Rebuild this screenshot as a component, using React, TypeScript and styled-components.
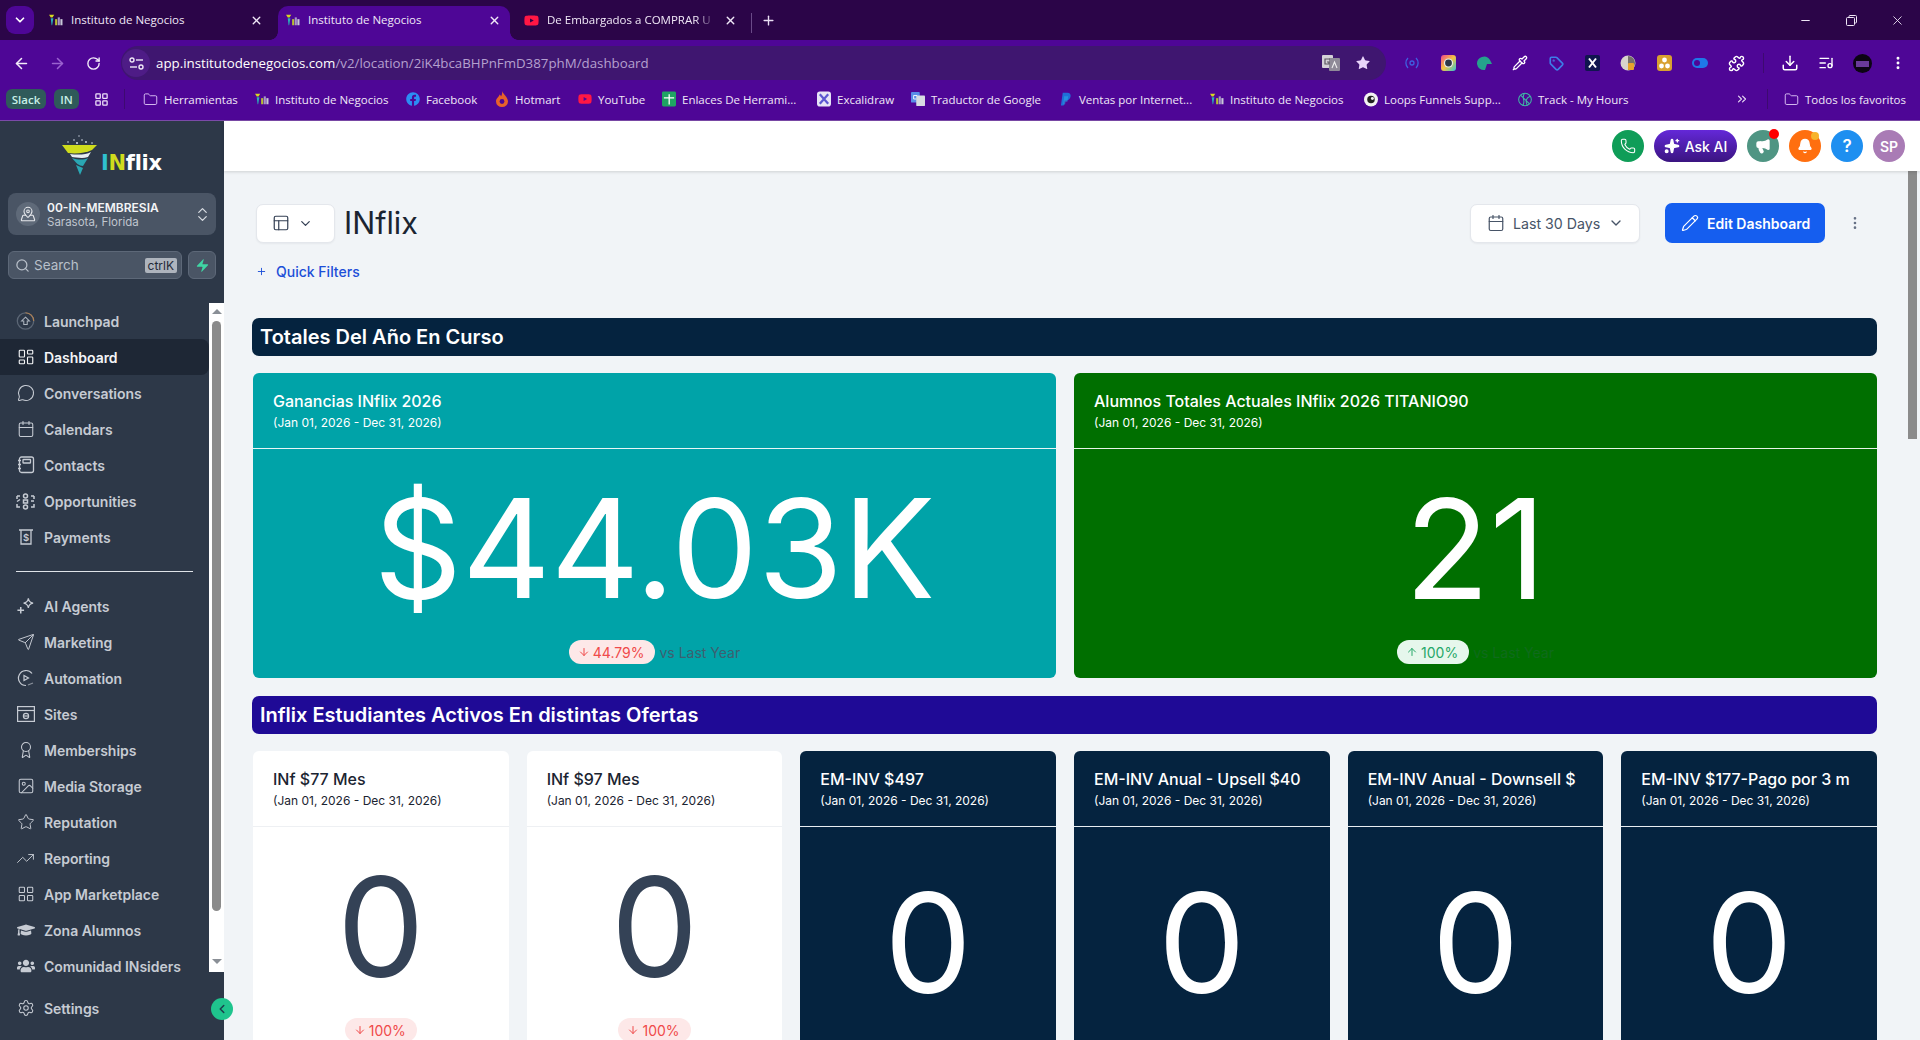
import React from "react";
import styled, { createGlobalStyle } from "styled-components";
import {
  ArrowLeft, ArrowRight, RotateCw, X, Plus, Minus, ChevronDown, ChevronUp, ChevronLeft, ChevronsRight,
  Star, Download, ListMusic, MoreVertical, Folder, LayoutGrid, MapPinned, Search, Zap, MessageCircle, Calendar,
  Send, Award, Image as ImageIcon, TrendingUp, Settings, Phone, Bell, Pencil, ArrowDown, ArrowUp, Megaphone,
  Puzzle, Sparkles, LayoutDashboard, PanelsTopLeft, Pipette, Tag,
} from "lucide-react";
import { FaGraduationCap, FaUsers, FaFacebook, FaYoutube } from "react-icons/fa";

const Global = createGlobalStyle`
  html, body { margin: 0; padding: 0; height: 100%; overflow: hidden; background: #f1f4f7; }
  #root { height: 100%; }
  * { box-sizing: border-box; }
`;

const Page = styled.div`
  width: 1920px; height: 1040px; display: flex; flex-direction: column; overflow: hidden;
  font-family: Inter, "Liberation Sans", sans-serif;
`;

/* ---------- browser chrome ---------- */
const TabStrip = styled.div`
  height: 40px; background: #2b0548; display: flex; align-items: flex-end; padding-left: 6px;
  font-family: "Open Sans", "Liberation Sans", sans-serif; color: #f0e8f7; position: relative;
`;
const TabMenu = styled.div`
  width: 28px; height: 28px; margin-bottom: 6px; border-radius: 9px; background: #4e0696;
  display: flex; align-items: center; justify-content: center; color: #fff; margin-right: 15px;
`;
const Tab = styled.div<{ $active?: boolean; $w: number; $pl: number; $pr: number }>`
  width: ${p => p.$w}px; height: 34px; display: flex; align-items: center; gap: 8px; position: relative;
  padding: 0 ${p => p.$pr}px ${p => (p.$active ? 0 : 6)}px ${p => p.$pl}px; border-radius: 10px 10px 0 0;
  background: ${p => (p.$active ? "#4e0696" : "transparent")};
  font-size: 11.5px; white-space: nowrap;
  ${p => p.$active && `
    padding-bottom: 6px;
    &::before, &::after { content: ""; position: absolute; bottom: 0; width: 8px; height: 8px; }
    &::before { left: -8px; background: radial-gradient(circle at 0 0, transparent 7.5px, #4e0696 8px); }
    &::after { right: -8px; background: radial-gradient(circle at 100% 0, transparent 7.5px, #4e0696 8px); }
  `}
`;
const TabTitle = styled.span<{ $fade?: boolean }>`
  flex: 1; overflow: hidden; margin-top: -1px;
  ${p => p.$fade && `mask-image: linear-gradient(90deg, #000 88%, transparent);`}
`;
const TabSep = styled.div`
  width: 1px; height: 20px; background: #6a4a88; margin: 0 9px 7px 10px;
`;
const PlusWrap = styled.div`
  height: 34px; padding-bottom: 6px; display: flex; align-items: center; color: #eadff3;
`;
const WindowBtns = styled.div`
  margin-left: auto; height: 40px; display: flex; align-items: center; color: #efe6f6;
`;
const WindowBtn = styled.div`
  width: 46px; display: flex; justify-content: center;
`;
const Toolbar = styled.div`
  height: 40px; background: #4e0696; display: flex; align-items: center; padding: 6px 0 0 3px; color: #f1e9f8;
`;
const NavBtn = styled.div<{ $dim?: boolean }>`
  width: 36px; display: flex; justify-content: center; color: ${p => (p.$dim ? "#9a62cf" : "#f3ecf9")};
`;
const Omni = styled.div`
  width: 1265px; height: 34px; margin-left: 10px; border-radius: 17px; background: #3f1670;
  display: flex; align-items: center; font-family: "Open Sans", "Liberation Sans", sans-serif; font-size: 13.3px; color: #b5a0cf;
  padding-right: 15px; flex: none;
`;
const SiteInfo = styled.div`
  width: 28px; height: 28px; margin-left: 1px; margin-right: 6px; border-radius: 50%; background: #4e1c86;
  display: flex; align-items: center; justify-content: center; color: #f0e8f7;
`;
const Host = styled.span`
  color: #fff;
`;
const OmniRight = styled.div`
  margin-left: auto; display: flex; align-items: center; gap: 15px; color: #e0c9f8;
`;
const ExtRow = styled.div`
  display: flex; align-items: center; margin-left: 8px;
`;
const Ext = styled.div`
  width: 36px; display: flex; justify-content: center; align-items: center; color: #fff;
`;
const ToolDivider = styled.div`
  width: 1px; height: 20px; background: #3d0a70; margin: 0 8px 0 9px;
`;
const Bookmarks = styled.div`
  height: 41px; background: #4e0696; display: flex; align-items: center; padding: 0 14px 2px 6px;
  font-family: "Open Sans", "Liberation Sans", sans-serif; font-size: 11.5px; color: #f0e8f7; border-bottom: 1px solid #7b4aa8; white-space: nowrap;
`;
const Chip = styled.div<{ $w: number }>`
  width: ${p => p.$w}px; height: 20px; border-radius: 6px; background: #2f5a5a; color: #c9f0e8; font-weight: 600;
  display: flex; align-items: center; justify-content: center; margin-right: 8px;
`;
const BmGridBtn = styled.div`
  width: 22px; margin: 0 0 0 3px; display: flex; justify-content: center; color: #efe3fa;
`;
const BmDivider = styled.div<{ $l: number; $r: number }>`
  width: 1px; height: 20px; background: #3d0a70; margin: 0 ${p => p.$r}px 0 ${p => p.$l}px;
`;
const Bm = styled.div<{ $w?: number }>`
  display: flex; align-items: center; flex: none; ${p => (p.$w ? `width: ${p.$w}px;` : "")}
`;
const BmIcon = styled.span`
  width: 15px; flex: none; display: flex; justify-content: center; align-items: center; margin: 0 6px 0 -6px;
`;
const BmRight = styled.div`
  margin-left: auto; display: flex; align-items: center;
`;

/* ---------- app ---------- */
const App_ = styled.div`
  flex: 1; display: flex; min-height: 0;
`;
const Side = styled.aside`
  width: 224px; flex: none; background: #2d3848; display: flex; flex-direction: column; position: relative;
`;
const LogoWrap = styled.div`
  height: 72px; padding: 14px 0 0 62px; display: flex; align-items: flex-start; gap: 3px;
`;
const LogoText = styled.div`
  font-family: "DejaVu Sans", sans-serif; font-weight: 700; font-size: 21px; line-height: 24px; margin-top: 16px; color: #fff; letter-spacing: -0.3px;
`;
const LogoI = styled.span<{ $c: string }>`
  color: ${p => p.$c};
`;
const Location = styled.div`
  margin: 0 8px; height: 42px; border-radius: 8px; background: #4a5565; display: flex; align-items: center; padding: 0 8px; color: #fff;
`;
const LocIcon = styled.div`
  width: 24px; height: 24px; border-radius: 50%; background: #5f6a79; display: flex; align-items: center; justify-content: center; color: #e6e8ec; flex: none; margin-right: 7px;
`;
const LocText = styled.div`
  flex: 1; display: flex; flex-direction: column; font-size: 12px; line-height: 15px; padding-top: 1px;
`;
const LocName = styled.span`
  font-weight: 600; color: #f3f4f6;
`;
const LocSub = styled.span`
  color: #c0c6cf; font-size: 11.5px;
`;
const UpDown = styled.div`
  display: flex; flex-direction: column; color: #d8dce2; margin-right: -2px; gap: 0;
  & > svg:first-child { margin-bottom: -7px; }
`;
const SearchRow = styled.div`
  margin: 16px 8px 24px; display: flex; gap: 6px; height: 28px;
`;
const SearchBox = styled.div`
  flex: 1; border-radius: 6px; background: #4a5565; border: 1px solid #5d6878; display: flex; align-items: center; padding: 0 4px 0 6px; gap: 4px; color: #b9c0ca; font-size: 13.5px;
`;
const Kbd = styled.span`
  margin-left: auto; background: #aeb4bd; color: #1f2937; font-size: 12px; line-height: 15px; padding: 0 3px; border-radius: 2px;
`;
const Bolt = styled.div`
  width: 28px; border-radius: 6px; background: #4a5565; border: 1px solid #5d6878; display: flex; align-items: center; justify-content: center; color: #3fd6a4;
`;
const NavScroll = styled.div`
  height: 669px; display: flex;
`;
const NavList = styled.div`
  flex: 1; min-width: 0;
`;
const NavItem = styled.div<{ $active?: boolean }>`
  height: 36px; display: flex; align-items: center; padding-left: 16px; gap: 9px; font-size: 14px; font-weight: 600; letter-spacing: -0.03px;
  color: ${p => (p.$active ? "#f4f5f7" : "#c6cbd3")};
  background: ${p => (p.$active ? "#1e2735" : "transparent")};
  border-radius: ${p => (p.$active ? "0 8px 8px 0" : "0")};
`;
const NavIcon = styled.span`
  width: 19px; display: flex; justify-content: center; flex: none;
`;
const NavDivider = styled.div`
  height: 1px; background: #dfe3e8; margin: 16px 16px 16px 16px;
`;
const Track = styled.div`
  width: 15px; flex: none; background: #fff; display: flex; flex-direction: column; align-items: center; padding-top: 6px;
`;
const ArrowUpTri = styled.div`
  border-left: 5px solid transparent; border-right: 5px solid transparent; border-bottom: 5px solid #8a8f96;
`;
const Thumb = styled.div`
  width: 9px; height: 590px; margin-top: 7px; border-radius: 5px; background: #8b8b8b;
`;
const ArrowDownTri = styled.div`
  border-left: 5px solid transparent; border-right: 5px solid transparent; border-top: 5px solid #8a8f96; margin-top: 48px;
`;
const SettingsRow = styled.div`
  margin-top: 18px;
`;
const Collapse = styled.div`
  position: absolute; right: -9px; top: 877px; width: 22px; height: 22px; border-radius: 50%; background: #1fc48d; color: #1c3d4c;
  display: flex; align-items: center; justify-content: center;
`;
const Main = styled.main`
  flex: 1; min-width: 0; display: flex; flex-direction: column;
`;
const TopBar = styled.header`
  height: 50px; flex: none; background: #fff; box-shadow: 0 1px 3px rgba(0,0,0,.15); display: flex; align-items: center; justify-content: flex-end; padding-right: 15px; gap: 10px; position: relative;
`;
const Round = styled.div<{ $bg: string; $fs?: number }>`
  width: 32px; height: 32px; border-radius: 50%; background: ${p => p.$bg}; color: #fff; display: flex; align-items: center; justify-content: center; position: relative; font-size: ${p => p.$fs ?? 14}px; font-weight: 600; flex: none;
`;
const Dot = styled.span<{ $c: string; $s: number }>`
  position: absolute; top: ${p => (p.$s > 8 ? -1 : 2)}px; right: ${p => (p.$s > 8 ? 0 : 2)}px; width: ${p => p.$s}px; height: ${p => p.$s}px; border-radius: 50%; background: ${p => p.$c};
`;
const AskAI = styled.div`
  width: 83px; height: 32px; border-radius: 16px; background: linear-gradient(180deg, #6428d8, #3a1480); color: #fff; font-size: 14px; font-weight: 500; display: flex; align-items: center; justify-content: center; gap: 5px;
`;
const Body = styled.div`
  flex: 1; display: flex; min-height: 0; background: #f1f4f7;
`;
const Content = styled.div`
  flex: 1; min-width: 0; padding: 32px 31px 0 28px; overflow: hidden;
`;
const PageScroll = styled.div`
  width: 12px; flex: none;
`;
const PageThumb = styled.div`
  width: 9px; height: 268px; background: #8b8b8b;
`;
const TitleRow = styled.div`
  display: flex; align-items: center; height: 40px; padding-left: 4px;
`;
const WhiteBtn = styled.div`
  height: 39px; border-radius: 7px; background: #fff; border: 1px solid #e4e7ec; box-shadow: 0 1px 2px rgba(16,24,40,.05); display: flex; align-items: center; color: #344054;
`;
const LayoutBtn = styled(WhiteBtn)`
  width: 79px; padding-left: 15px; gap: 8px;
`;
const Title = styled.h1`
  font-size: 30.5px; font-weight: 400; color: #1b2431; margin: 0 0 0 9px; line-height: 40px;
`;
const RightBtns = styled.div`
  margin-left: auto; display: flex; align-items: center;
`;
const DateBtn = styled(WhiteBtn)`
  width: 170px; padding-left: 16px; gap: 8px; font-size: 14.2px; color: #475467;
`;
const EditBtn = styled.div`
  width: 160px; height: 40px; margin-left: 25px; border-radius: 7px; background: #155eef; color: #fff; font-size: 14px; font-weight: 600; display: flex; align-items: center; padding-left: 16px; gap: 8px;
`;
const Kebab = styled.div`
  width: 60px; display: flex; justify-content: center; color: #667085; margin-right: -8px;
`;
const Quick = styled.div`
  margin: 18px 0 37px 4px; height: 20px; display: flex; align-items: center; gap: 9px; color: #1d4fd8; font-size: 14px; font-weight: 500;
`;
const SectionBar = styled.div<{ $bg: string }>`
  height: 38px; border-radius: 7px; background: ${p => p.$bg}; color: #fff; font-size: 20px; font-weight: 600; display: flex; align-items: center; padding-left: 8px;
`;
const Row = styled.div<{ $cols: number }>`
  display: grid; grid-template-columns: repeat(${p => p.$cols}, 1fr); gap: 18px; margin: 17px 0 18px 1px;
`;
const Card = styled.div<{ $bg: string; $fg: string; $line: string }>`
  height: 305px; border-radius: 6px; background: ${p => p.$bg}; color: ${p => p.$fg}; overflow: hidden; --line: ${p => p.$line};
`;
const CardHead = styled.div`
  height: 76px; padding: 16px 20px 0; border-bottom: 1px solid var(--line);
`;
const CardTitle = styled.div`
  font-size: 16px; font-weight: 500; line-height: 24px; white-space: nowrap;
`;
const CardDate = styled.div`
  font-size: 12px; line-height: 18px; margin-top: 1px; white-space: nowrap;
`;
const CardBody = styled.div<{ $top: number }>`
  padding-top: ${p => p.$top}px; display: flex; flex-direction: column; align-items: center;
`;
const BigValue = styled.div<{ $c: string; $size?: number }>`
  height: 183px; line-height: 183px; font-size: ${p => p.$size ?? 139}px; font-weight: 400; color: ${p => p.$c}; white-space: nowrap;
`;
const PillRow = styled.div`
  display: flex; align-items: center; gap: 4px; font-size: 14px;
`;
const Pill = styled.div<{ $bg: string; $c: string }>`
  height: 24px; padding: 0 11px 0 9px; border-radius: 12px; background: ${p => p.$bg}; color: ${p => p.$c}; display: flex; align-items: center; gap: 3px; font-size: 14px;
`;
const VsText = styled.span<{ $c: string }>`
  color: ${p => p.$c};
`;

/* ---------- drawings ---------- */
const FunnelLogo = () => (
  <svg width="36" height="40" viewBox="0 0 36 40">
    <g fill="#d7e0ea"><circle cx="6" cy="7" r=".8" /><circle cx="12" cy="5" r=".8" /><circle cx="15" cy="8" r="1" /><circle cx="20" cy="5" r=".8" /><circle cx="24" cy="7" r=".9" /><circle cx="30" cy="8" r=".8" /><circle cx="17" cy="1" r=".7" /></g>
    <path d="M0 10 H35 L30 15 C24 18 14 19 6 18 Z" fill="#cfdc1d" />
    <path d="M8 19 C15 20 24 20 29 17 L26 22 C20 24 13 22 10 22 Z" fill="#e8edf2" />
    <path d="M10 23 C16 25 22 25 26 23 L21 31 C17 31 14 28 10 23 Z" fill="#2aa7b4" />
    <path d="M14 30 L21 33 L18 40 Z" fill="#2aa7b4" />
  </svg>
);
const Favicon = () => (
  <svg width="14" height="14" viewBox="0 0 16 14">
    <path d="M0 1 H6 L4 4 L2 4 Z" fill="#d6d820" />
    <path d="M2 5 H5 L3.6 13 H3 Z" fill="#29b0b8" />
    <rect x="7" y="6" width="2.4" height="7" fill="#b8c030" />
    <rect x="10" y="4" width="2.4" height="9" fill="#a896c8" />
    <rect x="13" y="6" width="2.4" height="7" fill="#c8c8d8" />
  </svg>
);
const Restore = () => (
  <svg width="11" height="11" viewBox="0 0 11 11" fill="none" stroke="currentColor"><rect x=".5" y="2.5" width="8" height="8" rx="1" /><path d="M3 2.5 V1.5 a1 1 0 0 1 1-1 h5.5 a1 1 0 0 1 1 1 V7 a1 1 0 0 1-1 1 h-1" /></svg>
);
const TuneIcon = () => (
  <svg width="15" height="13" viewBox="0 0 15 13" fill="none" stroke="currentColor" strokeWidth="1.4">
    <circle cx="3" cy="3" r="2" /><path d="M7 3 H14" /><path d="M1 10 H8" /><circle cx="12" cy="10" r="2" />
  </svg>
);
const TabYt = () => <FaYoutube size={15} color="#ff1744" />;
const YtIcon = () => <FaYoutube size={14} color="#ff1744" />;
const HotmartIcon = () => (
  <svg width="12" height="16" viewBox="0 0 12 16"><path d="M6 0 C7 3 12 6 12 10.5 A6 5.5 0 0 1 0 10.5 C0 7 3 6 3.5 3.5 C4.5 4 5 5 5 5.5 C6 4 6.3 2 6 0 Z" fill="#e8622a" /><circle cx="6" cy="10.5" r="2.4" fill="#4e0696" /></svg>
);
const GreenDoc = () => (
  <svg width="14" height="16" viewBox="0 0 15 16"><rect width="15" height="16" rx="1.5" fill="#1fa463" /><path d="M7 3 H8.4 V6 H13 V7.4 H8.4 V14 H7 V7.4 H2 V6 H7 Z" fill="#fff" /></svg>
);
const ExcalIcon = () => (
  <svg width="14" height="16" viewBox="0 0 15 16"><rect width="15" height="16" rx="3" fill="#e6e4f7" /><path d="M3 3 L12 13 M12 3 L3 13" stroke="#5b57d1" strokeWidth="2.4" /></svg>
);
const TranslateIcon = () => (
  <svg width="14" height="16" viewBox="0 0 16 16"><rect width="10" height="12" rx="1" fill="#5a8de8" /><rect x="6" y="4" width="10" height="12" rx="1" fill="#d8dce2" /><path d="M3 4 H7 M3 4 V8 H6" stroke="#fff" fill="none" /></svg>
);
const OmniTranslate = () => (
  <svg width="18" height="18" viewBox="0 0 18 18"><rect x="0" y="1" width="11" height="13" rx="1" fill="#d4d0d8" /><rect x="7" y="4" width="11" height="13" rx="1" fill="#8f8a98" /><path d="M8 5 H3 V10 H7 V8 H5" stroke="#5a5560" fill="none" strokeWidth="1.2" /><path d="M10 14 L12.5 8 L15 14" stroke="#eee" fill="none" strokeWidth="1.1" /></svg>
);
const PayIcon = () => (
  <svg width="11" height="15" viewBox="0 0 12 15"><path d="M3 0 H8 C11 0 12 2 11.5 4.5 C11 7 9 8.5 6.5 8.5 H5 L4 14 H1 Z" fill="#1f6fd8" /><path d="M4.5 4 H9 L8 10 H6 L5.5 13 L3.5 13 Z" fill="#2aa5e8" opacity=".6" /></svg>
);
const LoopIcon = () => (
  <svg width="14" height="15" viewBox="0 0 15 16"><circle cx="7.5" cy="8" r="7.5" fill="#f3f3f3" /><circle cx="7.5" cy="8" r="4" fill="#222" /><circle cx="9" cy="7" r="1.6" fill="#f3f3f3" /></svg>
);
const TrackIcon = () => (
  <svg width="14" height="15" viewBox="0 0 15 15" fill="none" stroke="#3fb8a5" strokeWidth="1.1"><circle cx="7.5" cy="7.5" r="6.8" /><path d="M3 3 L12 12 M7 1 C3 6 9 9 5 14 M13 4 C8 6 8 10 10 14" /></svg>
);
const MiniTile = ({ bg, children }: { bg: string; children?: React.ReactNode }) => (
  <svg width="15" height="16" viewBox="0 0 15 16"><rect width="15" height="16" rx="3" fill={bg} />{children}</svg>
);
const OppIcon = () => (
  <svg width="19" height="17" viewBox="0 0 19 17" fill="none" stroke="currentColor" strokeWidth="1.5">
    <circle cx="9.5" cy="3" r="2" /><rect x="7.5" y="7" width="4" height="3" /><circle cx="9.5" cy="14" r="2" />
    <path d="M1 3 H4 M1 3 V6 M15 3 H18 M18 3 V6 M1 11 V14 H4 M18 11 V14 H15 M1 8.5 L4 6.5 M15 8 L18 8" />
  </svg>
);
const ContactsIcon = () => (
  <svg width="18" height="18" viewBox="0 0 18 18" fill="none" stroke="currentColor" strokeWidth="1.3">
    <rect x="2.5" y="1" width="14" height="15.5" rx="2" /><rect x="6" y="3.5" width="7.5" height="3.5" rx=".6" />
    <path d="M1 4.5 H4 M1 8.5 H4 M1 12.5 H4" />
  </svg>
);
const PaymentIcon = () => (
  <svg width="18" height="18" viewBox="0 0 18 18" fill="none" stroke="currentColor" strokeWidth="1.3">
    <path d="M2 2 H16 M4 2 V16 H14 V2" /><text x="9" y="13" fontSize="9.5" textAnchor="middle" fill="currentColor" stroke="none" fontFamily="Inter" fontWeight="600">$</text>
  </svg>
);
const AgentsIcon = () => (
  <svg width="20" height="18" viewBox="0 0 20 18" fill="none" stroke="currentColor" strokeWidth="1.3">
    <path d="M13 1 C13.5 4 15 5.5 18 6 C15 6.5 13.5 8 13 11 C12.5 8 11 6.5 8 6 C11 5.5 12.5 4 13 1 Z" />
    <path d="M5 10 V17 M1.5 13.5 H8.5" strokeWidth="1.6" />
  </svg>
);
const AutomationIcon = () => (
  <svg width="19" height="18" viewBox="0 0 19 18" fill="none" stroke="currentColor" strokeWidth="1.2">
    <path d="M16 4.5 A7.5 7.5 0 1 0 10 16.5" />
    <path d="M8 6.5 L12.5 9 L8 11.5 Z" />
    <path d="M12 16 L17 14" opacity=".6" />
  </svg>
);
const SitesIcon = () => (
  <svg width="18" height="16" viewBox="0 0 18 16" fill="none" stroke="currentColor" strokeWidth="1.2">
    <rect x=".6" y=".6" width="16.8" height="14.8" /><path d="M.6 4.5 H17.4" /><circle cx="9" cy="10" r="2.6" /><path d="M6.4 10 H11.6" />
  </svg>
);
const LaunchIcon = () => (
  <svg width="22" height="22" viewBox="0 0 22 22" fill="none">
    <circle cx="11" cy="11" r="9.5" stroke="#5b6675" strokeWidth="1.5" />
    <path d="M11 1.5 A9.5 9.5 0 0 1 20.5 11" stroke="#c98a4a" strokeWidth="1.2" opacity=".8" />
    <path d="M11 6.5 L15.5 11 H13 V15 H9 V11 H6.5 Z" stroke="#aeb5bf" strokeWidth="1.2" />
  </svg>
);

const navTop = [
  { label: "Launchpad", icon: <LaunchIcon /> },
  { label: "Dashboard", icon: <LayoutDashboard size={18} strokeWidth={1.5} />, active: true },
  { label: "Conversations", icon: <MessageCircle size={18} strokeWidth={1.4} /> },
  { label: "Calendars", icon: <Calendar size={18} strokeWidth={1.4} /> },
  { label: "Contacts", icon: <ContactsIcon /> },
  { label: "Opportunities", icon: <OppIcon /> },
  { label: "Payments", icon: <PaymentIcon /> },
];
const navBottom = [
  { label: "AI Agents", icon: <AgentsIcon /> },
  { label: "Marketing", icon: <Send size={18} strokeWidth={1.3} /> },
  { label: "Automation", icon: <AutomationIcon /> },
  { label: "Sites", icon: <SitesIcon /> },
  { label: "Memberships", icon: <Award size={18} strokeWidth={1.4} /> },
  { label: "Media Storage", icon: <ImageIcon size={18} strokeWidth={1.4} /> },
  { label: "Reputation", icon: <Star size={18} strokeWidth={1.3} /> },
  { label: "Reporting", icon: <TrendingUp size={19} strokeWidth={1.2} /> },
  { label: "App Marketplace", icon: <LayoutGrid size={18} strokeWidth={1.4} /> },
  { label: "Zona Alumnos", icon: <FaGraduationCap size={18} /> },
  { label: "Comunidad INsiders", icon: <FaUsers size={18} /> },
];

const bookmarks = [
  { label: "Herramientas", icon: <Folder size={15} strokeWidth={1.5} color="#dcc3f5" />, w: 111 },
  { label: "Instituto de Negocios", icon: <Favicon />, w: 151 },
  { label: "Facebook", icon: <FaFacebook size={14} color="#2c8cf4" />, w: 89 },
  { label: "Hotmart", icon: <HotmartIcon />, w: 83 },
  { label: "YouTube", icon: <YtIcon />, w: 84 },
  { label: "Enlaces De Herrami...", icon: <GreenDoc />, w: 155 },
  { label: "Excalidraw", icon: <ExcalIcon />, w: 94 },
  { label: "Traductor de Google", icon: <TranslateIcon />, w: 148 },
  { label: "Ventas por Internet...", icon: <PayIcon />, w: 151 },
  { label: "Instituto de Negocios", icon: <Favicon />, w: 154 },
  { label: "Loops Funnels Supp...", icon: <LoopIcon />, w: 154 },
  { label: "Track - My Hours", icon: <TrackIcon />, w: 0 },
];

const DATE = "(Jan 01, 2026 - Dec 31, 2026)";
const offers = [
  { t: "INf $77 Mes", dark: false },
  { t: "INf $97 Mes", dark: false },
  { t: "EM-INV $497", dark: true },
  { t: "EM-INV Anual - Upsell $40", dark: true },
  { t: "EM-INV Anual - Downsell $", dark: true },
  { t: "EM-INV $177-Pago por 3 m", dark: true },
];

export default function App() {
  return (
    <Page>
      <Global />
      <TabStrip>
        <TabMenu><ChevronDown size={14} strokeWidth={3} /></TabMenu>
        <Tab $w={229} $pl={0} $pr={15}><Favicon /><TabTitle>Instituto de Negocios</TabTitle><X size={13} strokeWidth={2.5} /></Tab>
        <Tab $active $w={232} $pl={8} $pr={9}><Favicon /><TabTitle>Instituto de Negocios</TabTitle><X size={13} strokeWidth={2.5} /></Tab>
        <Tab $w={231} $pl={14} $pr={4}><TabYt /><TabTitle $fade>De Embargados a COMPRAR U</TabTitle><X size={13} strokeWidth={2.5} /></Tab>
        <TabSep />
        <PlusWrap><Plus size={15} strokeWidth={2.2} /></PlusWrap>
        <WindowBtns>
          <WindowBtn><Minus size={13} /></WindowBtn>
          <WindowBtn><Restore /></WindowBtn>
          <WindowBtn><X size={15} strokeWidth={1.4} /></WindowBtn>
        </WindowBtns>
      </TabStrip>
      <Toolbar>
        <NavBtn><ArrowLeft size={17} strokeWidth={2.2} /></NavBtn>
        <NavBtn $dim><ArrowRight size={17} strokeWidth={2.2} /></NavBtn>
        <NavBtn><RotateCw size={15} strokeWidth={2.2} /></NavBtn>
        <Omni>
          <SiteInfo><TuneIcon /></SiteInfo>
          <span><Host>app.institutodenegocios.com</Host>/v2/location/2iK4bcaBHPnFmD387phM/dashboard</span>
          <OmniRight>
            <OmniTranslate />
            <Star size={16} fill="#e8d4fa" strokeWidth={0} />
          </OmniRight>
        </Omni>
        <ExtRow>
          <Ext><svg width="16" height="16" viewBox="0 0 16 16" fill="none" stroke="#3f5fe0" strokeWidth="1.3"><circle cx="8" cy="8" r="2" /><path d="M4 3 a7 7 0 0 0 0 10 M12 3 a7 7 0 0 1 0 10" /></svg></Ext>
          <Ext><svg width="15" height="16" viewBox="0 0 15 16"><defs><linearGradient id="rb" x1="0" y1="0" x2="1" y2="1"><stop offset="0" stopColor="#f0468c" /><stop offset=".5" stopColor="#f5c542" /><stop offset="1" stopColor="#2cc4d8" /></linearGradient></defs><rect width="15" height="16" rx="3" fill="url(#rb)" /><circle cx="7.5" cy="8" r="4.6" fill="#e8eef0" /><circle cx="7.5" cy="8" r="3.4" fill="#2d3848" /></svg></Ext>
          <Ext><svg width="16" height="16" viewBox="0 0 16 16"><path d="M1 9 A7 7 0 0 1 14 5 L16 9 L11 9 L9 15 A7 7 0 0 1 1 9 Z" fill="#25a28c" /></svg></Ext>
          <Ext><Pipette size={16} strokeWidth={2} /></Ext>
          <Ext><Tag size={15} color="#3d7de8" strokeWidth={2.6} /></Ext>
          <Ext><svg width="15" height="16" viewBox="0 0 15 16"><rect width="15" height="16" rx="2" fill="#10154f" /><path d="M4 3.5 L11 12.5 M11 3.5 L4 12.5" stroke="#fff" strokeWidth="2" /></svg></Ext>
          <Ext><svg width="16" height="16" viewBox="0 0 16 16"><circle cx="8" cy="8" r="7.5" fill="#d8d4cc" /><path d="M8 1 V15 A7 7 0 0 0 8 1Z" fill="#74706a" /><rect x="8" y="8" width="6" height="7" rx="1" fill="#e8a32c" /></svg></Ext>
          <Ext><MiniTile bg="#d8a030"><circle cx="7.5" cy="5" r="2.4" fill="#fff" /><circle cx="4.5" cy="11" r="2.4" fill="#fff" /><circle cx="10.5" cy="11" r="2.4" fill="#fff" /></MiniTile></Ext>
          <Ext><svg width="16" height="12" viewBox="0 0 16 12"><rect y="1" width="16" height="10" rx="5" fill="#1e78e8" /><circle cx="5" cy="6" r="3" fill="#4e0696" /></svg></Ext>
          <Ext><Puzzle size={17} strokeWidth={2} /></Ext>
          <ToolDivider />
          <Ext><Download size={18} strokeWidth={2} /></Ext>
          <Ext><ListMusic size={16} strokeWidth={2} /></Ext>
          <Ext><svg width="19" height="19" viewBox="0 0 19 19"><circle cx="9.5" cy="9.5" r="9.5" fill="#0c0414" /><rect x="3" y="7" width="13" height="6" fill="#6a3a9a" /></svg></Ext>
          <Ext><MoreVertical size={16} strokeWidth={2.4} /></Ext>
        </ExtRow>
      </Toolbar>
      <Bookmarks>
        <Chip $w={40}>Slack</Chip>
        <Chip $w={25}>IN</Chip>
        <BmGridBtn><LayoutGrid size={15} strokeWidth={2} /></BmGridBtn>
        <BmDivider $l={12} $r={24} />
        {bookmarks.map((b, i) => (
          <Bm key={i} $w={b.w}><BmIcon>{b.icon}</BmIcon><span>{b.label}</span></Bm>
        ))}
        <BmRight>
          <ChevronsRight size={14} color="#e5d8f2" />
          <BmDivider $l={18} $r={22} />
          <Bm><BmIcon><Folder size={15} strokeWidth={1.5} color="#dcc3f5" /></BmIcon><span>Todos los favoritos</span></Bm>
        </BmRight>
      </Bookmarks>
      <App_>
        <Side>
          <LogoWrap>
            <FunnelLogo />
            <LogoText><LogoI $c="#2fc1cf">I</LogoI><LogoI $c="#cfdc1d">N</LogoI>flix</LogoText>
          </LogoWrap>
          <Location>
            <LocIcon><MapPinned size={16} strokeWidth={1.6} /></LocIcon>
            <LocText><LocName>00-IN-MEMBRESIA</LocName><LocSub>Sarasota, Florida</LocSub></LocText>
            <UpDown><ChevronUp size={15} strokeWidth={2} /><ChevronDown size={15} strokeWidth={2} /></UpDown>
          </Location>
          <SearchRow>
            <SearchBox><Search size={15} />Search<Kbd>ctrlK</Kbd></SearchBox>
            <Bolt><Zap size={15} fill="#3fd6a4" strokeWidth={0} /></Bolt>
          </SearchRow>
          <NavScroll>
            <NavList>
              {navTop.map(n => (
                <NavItem key={n.label} $active={n.active}><NavIcon>{n.icon}</NavIcon>{n.label}</NavItem>
              ))}
              <NavDivider />
              {navBottom.map(n => (
                <NavItem key={n.label}><NavIcon>{n.icon}</NavIcon>{n.label}</NavItem>
              ))}
            </NavList>
            <Track>
              <ArrowUpTri />
              <Thumb />
              <ArrowDownTri />
            </Track>
          </NavScroll>
          <SettingsRow>
            <NavItem><NavIcon><Settings size={18} strokeWidth={1.4} /></NavIcon>Settings</NavItem>
          </SettingsRow>
          <Collapse><ChevronLeft size={14} strokeWidth={2.6} /></Collapse>
        </Side>
        <Main>
          <TopBar>
            <Round $bg="#0f9d58"><Phone size={16} strokeWidth={1.6} /></Round>
            <AskAI><Sparkles size={16} fill="#fff" />Ask AI</AskAI>
            <Round $bg="#4f9583"><Megaphone size={16} fill="#fff" /><Dot $c="#f00" $s={10} /></Round>
            <Round $bg="#ff6f0f"><Bell size={16} fill="#fff" /><Dot $c="#f7b32b" $s={8} /></Round>
            <Round $bg="#1e8ff0" $fs={17}>?</Round>
            <Round $bg="#a97bb5">SP</Round>
          </TopBar>
          <Body>
            <Content>
              <TitleRow>
                <LayoutBtn><PanelsTopLeft size={18} strokeWidth={1.6} /><ChevronDown size={15} /></LayoutBtn>
                <Title>INflix</Title>
                <RightBtns>
                  <DateBtn><Calendar size={18} strokeWidth={1.6} />Last 30 Days<ChevronDown size={16} /></DateBtn>
                  <EditBtn><Pencil size={18} strokeWidth={1.6} />Edit Dashboard</EditBtn>
                  <Kebab><MoreVertical size={16} /></Kebab>
                </RightBtns>
              </TitleRow>
              <Quick><Plus size={11} strokeWidth={2} />Quick Filters</Quick>
              <SectionBar $bg="#05233f">Totales Del Año En Curso</SectionBar>
              <Row $cols={2}>
                <Card $bg="#00a3a8" $fg="#fff" $line="#e8f6f6">
                  <CardHead><CardTitle>Ganancias INflix 2026</CardTitle><CardDate>{DATE}</CardDate></CardHead>
                  <CardBody $top={8}>
                    <BigValue $c="#fff" $size={137.5}>$44.03K</BigValue>
                    <PillRow>
                      <Pill $bg="#fde8e8" $c="#f04a4a"><ArrowDown size={12} />44.79%</Pill>
                      <VsText $c="#3d6070">vs Last Year</VsText>
                    </PillRow>
                  </CardBody>
                </Card>
                <Card $bg="#006f00" $fg="#fff" $line="#e8f3e8">
                  <CardHead><CardTitle>Alumnos Totales Actuales INflix 2026 TITANIO90</CardTitle><CardDate>{DATE}</CardDate></CardHead>
                  <CardBody $top={8}>
                    <BigValue $c="#fff">21</BigValue>
                    <PillRow>
                      <Pill $bg="#e6f7ec" $c="#27a869"><ArrowUp size={12} />100%</Pill>
                      <VsText $c="#0f6b1c">vs Last Year</VsText>
                    </PillRow>
                  </CardBody>
                </Card>
              </Row>
              <SectionBar $bg="#1f0a96">Inflix Estudiantes Activos En distintas Ofertas</SectionBar>
              <Row $cols={6}>
                {offers.map(o => (
                  <Card key={o.t} $bg={o.dark ? "#05233f" : "#fff"} $fg={o.dark ? "#fff" : "#1b2431"} $line={o.dark ? "#e8edf2" : "#eef0f3"}>
                    <CardHead><CardTitle>{o.t}</CardTitle><CardDate>{DATE}</CardDate></CardHead>
                    <CardBody $top={o.dark ? 24 : 8}>
                      <BigValue $c={o.dark ? "#fff" : "#344256"}>0</BigValue>
                      {!o.dark && (
                        <PillRow>
                          <Pill $bg="#fde8e8" $c="#f04a4a"><ArrowDown size={12} />100%</Pill>
                        </PillRow>
                      )}
                    </CardBody>
                  </Card>
                ))}
              </Row>
            </Content>
            <PageScroll><PageThumb /></PageScroll>
          </Body>
        </Main>
      </App_>
    </Page>
  );
}
